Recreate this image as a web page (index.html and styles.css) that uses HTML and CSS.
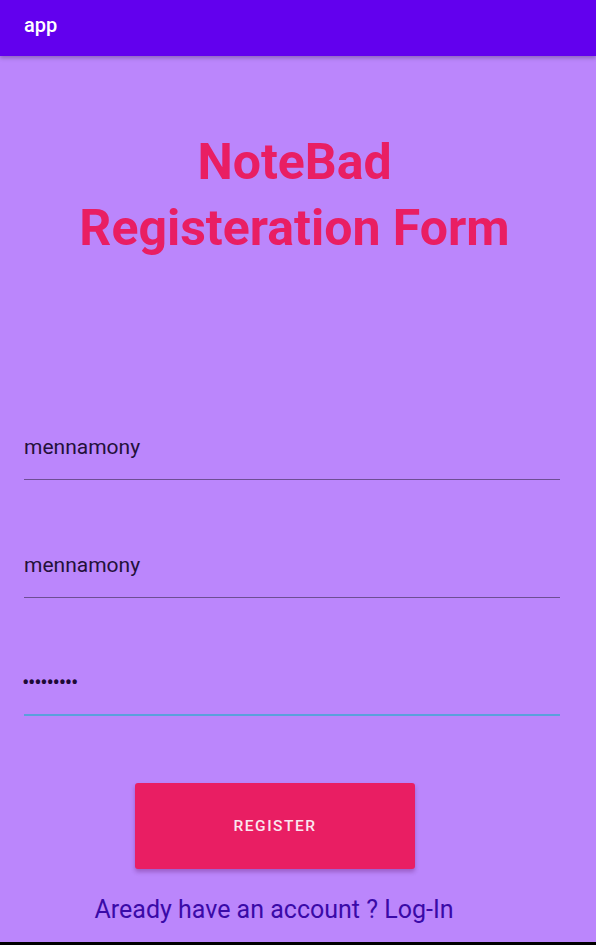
FILE: index.html
```html
<!DOCTYPE html>
<html lang="en">
<head>
<meta charset="utf-8">
<title>app</title>
<link rel="stylesheet" href="styles.css">
</head>
<body>
<div class="screen">
  <header class="appbar"><span class="appbar-title">app</span></header>
  <main class="content">
    <h1 class="title">NoteBad<br>Registeration Form</h1>
    <form class="form">
      <div class="field"><span class="field-text">mennamony</span></div>
      <div class="field"><span class="field-text">mennamony</span></div>
      <div class="field field-focused"><span class="field-text field-password">•••••••••</span></div>
      <button type="button" class="btn">REGISTER</button>
      <p class="login-link">Aready have an account ? Log-In</p>
    </form>
  </main>
</div>
</body>
</html>
```
FILE: styles.css
```css
* { box-sizing: border-box; }
html, body { margin: 0; padding: 0; }
body {
  font-family: Roboto, "Noto Sans", "Liberation Sans", sans-serif;
  background: #bb86fc;
}
.screen {
  width: 596px;
  height: 945px;
  background: #bb86fc;
  border-bottom: 3px solid #000;
  overflow: hidden;
}
.appbar {
  height: 56px;
  background: #6200ee;
  display: flex;
  align-items: center;
  padding: 0 24px 6px;
  box-shadow: 0 2px 4px rgba(0,0,0,0.25);
  position: relative;
}
.appbar-title {
  color: #fff;
  font-size: 20px;
  font-weight: 500;
}
.content {
  padding: 0 36px 0 24px;
}
.title {
  margin: 73px 0 0;
  text-align: center;
  color: #e91e63;
  font-size: 50px;
  font-weight: 700;
  line-height: 66px;
  padding-left: 5px;
}
.form {
  margin-top: 174px;
}
.field {
  padding-bottom: 20px;
  border-bottom: 1px solid #6e4e94;
  margin-bottom: 73px;
}
.field-text {
  display: block;
  font-size: 21px;
  line-height: 24px;
  color: #24103a;
}
.field-focused {
  border-bottom: 2px solid #5aa0dc;
  padding-bottom: 19px;
  margin-bottom: 67px;
}
.field-password {
  font-size: 22px;
  letter-spacing: -1.3px;
  margin-left: -2px;
  color: #1e0a36;
}
.btn {
  display: block;
  width: 280px;
  height: 86px;
  margin: 0 0 0 111px;
  border: none;
  border-radius: 3px;
  background: #e91e63;
  color: #fbe6ef;
  font-family: inherit;
  font-size: 15.5px;
  font-weight: 500;
  letter-spacing: 1.5px;
  box-shadow: 0 3px 4px rgba(80,0,80,0.3);
}
.login-link {
  margin: 27px 0 0;
  text-align: center;
  padding-right: 36px;
  font-size: 25px;
  line-height: 28px;
  color: #3a0aa8;
}
```
